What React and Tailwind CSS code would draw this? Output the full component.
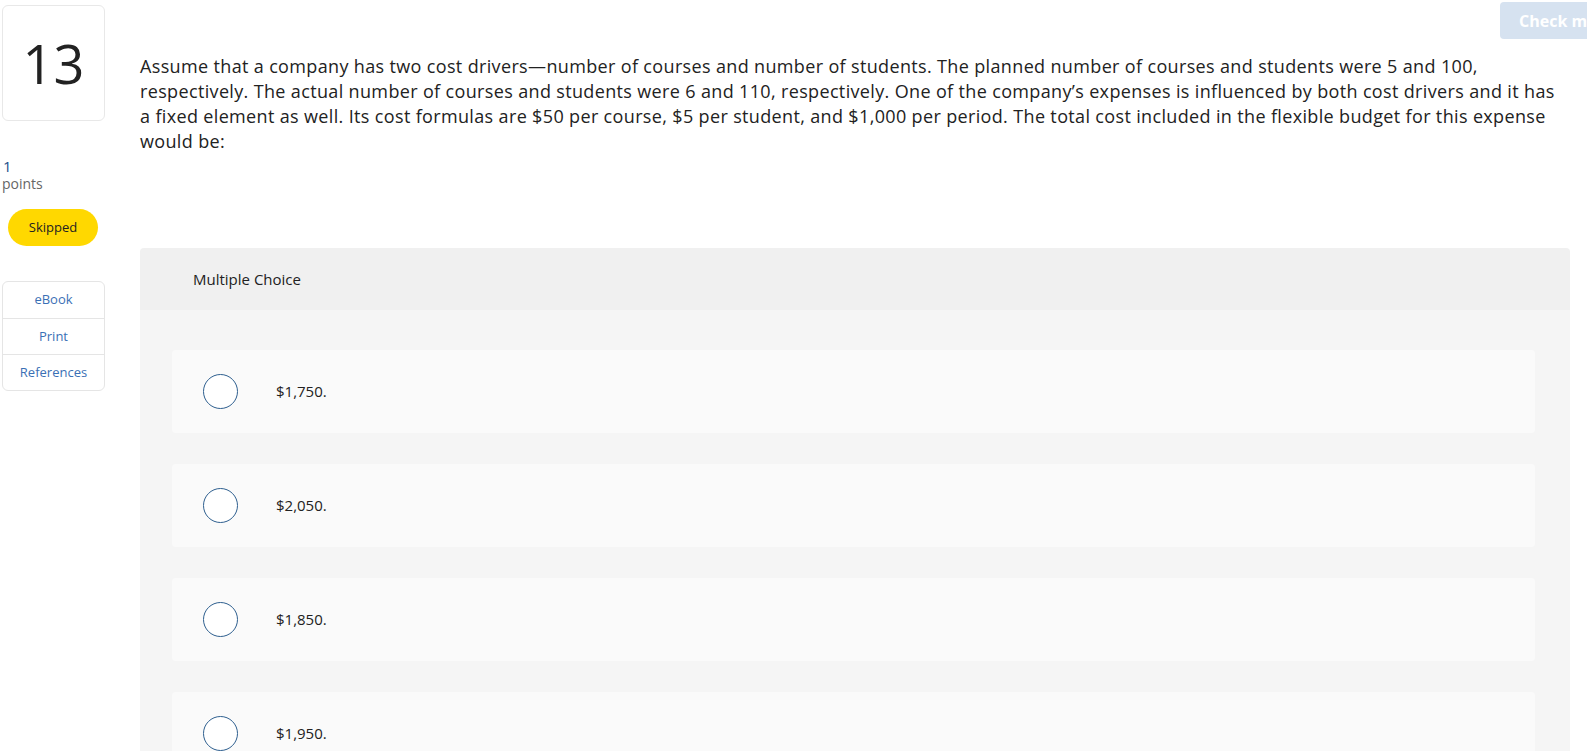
import React from 'react';

const options = ['$1,750.', '$2,050.', '$1,850.', '$1,950.'];

const Option = ({ label }) => (
  <div className="h-[83px] bg-[#fafafa] rounded flex items-center pl-[31px] mb-[31px]">
    <span className="w-[35px] h-[35px] rounded-full border-[1.5px] border-[#2e5f8f] bg-white shrink-0" />
    <span className="ml-[38px] text-[15px] text-[#222]">{label}</span>
  </div>
);

const App = () => {
  return (
    <div className="w-[1587px] h-[751px] overflow-hidden bg-white relative font-['Open_Sans',sans-serif] text-[#222]">
      <button className="absolute right-[-80px] top-[2px] w-[167px] h-[37px] rounded bg-[#d6e2f0] text-white font-bold text-[16px] text-left pl-[19px] whitespace-nowrap">
        Check my work
      </button>
      <div className="flex">
        <div className="w-[103px] ml-[2px] pt-[5px] shrink-0">
          <div className="h-[116px] border border-[#e8e8e8] rounded-md flex items-center justify-center">
            <span className="text-[54px] leading-none text-[#222]">13</span>
          </div>
          <div className="mt-[36px] pl-[1px] text-[15px] leading-[18px] text-[#1c4f8a]">1</div>
          <div className="text-[14px] leading-[18px] text-[#666]">points</div>
          <div className="mt-[16px] ml-[6px] w-[90px] h-[37px] rounded-full bg-[#ffd800] flex items-center justify-center text-[13px] text-[#222]">
            Skipped
          </div>
          <div className="mt-[35px] border border-[#e5e5e5] rounded-md text-[13px] text-[#3a70b5]">
            <div className="h-[37px] flex items-center justify-center border-b border-[#e5e5e5]">eBook</div>
            <div className="h-[36px] flex items-center justify-center border-b border-[#e5e5e5]">Print</div>
            <div className="h-[35px] flex items-center justify-center">References</div>
          </div>
        </div>
        <div className="ml-[35px] mr-[17px] flex-1">
          <p className="mt-[54px] text-[18px] leading-[25px] tracking-[0.35px] max-w-[1415px] text-[#222]">
            Assume that a company has two cost drivers—number of courses and number of students. The planned number of courses and students were 5 and 100, respectively. The actual number of courses and students were 6 and 110, respectively. One of the company’s expenses is influenced by both cost drivers and it has a fixed element as well. Its cost formulas are $50 per course, $5 per student, and $1,000 per period. The total cost included in the flexible budget for this expense would be:
          </p>
          <div className="mt-[94px] rounded-t">
            <div className="h-[62px] bg-[#f0f0f0] rounded-t flex items-center pl-[53px] text-[15px] text-[#222]">
              Multiple Choice
            </div>
            <div className="bg-[#f5f5f5] pt-[40px] pl-[32px] pr-[35px]">
              {options.map((o) => (
                <Option key={o} label={o} />
              ))}
            </div>
          </div>
        </div>
      </div>
    </div>
  );
};

export default App;
